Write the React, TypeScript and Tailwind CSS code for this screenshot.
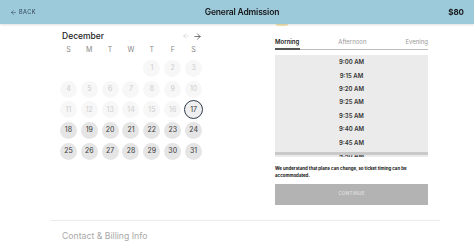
import { ArrowLeft, ArrowRight } from "lucide-react";

const dayNames = ["S", "M", "T", "W", "T", "F", "S"];
const times = ["9:00 AM", "9:15 AM", "9:20 AM", "9:25 AM", "9:35 AM", "9:40 AM", "9:45 AM", "9:50 AM"];

const DateCell = ({ day }: { day: number | null }) => {
  if (day === null) return <div />;

  const past = day < 17;
  const selected = day === 17;

  return (
    <div className="flex items-center justify-center">
      <div
        className={
          selected
            ? "flex h-[19px] w-[19px] items-center justify-center rounded-full border-[1.5px] border-[#2e3b4c] bg-[#efefef] text-[7px] text-[#333]"
            : past
              ? "flex h-[17px] w-[17px] items-center justify-center rounded-full bg-[#f7f7f7] text-[7px] text-[#cdcdcd]"
              : "flex h-[17px] w-[17px] items-center justify-center rounded-full bg-[#e5e5e5] text-[7px] text-[#3a3a3a]"
        }
      >
        {day}
      </div>
    </div>
  );
};

export default function App() {
  const cells: (number | null)[] = [null, null, null, null];
  for (let d = 1; d <= 31; d++) cells.push(d);

  return (
    <div className="min-h-screen bg-white font-['Inter',sans-serif] text-[#222]">
      <header className="fixed inset-x-0 top-0 z-10 grid h-[24px] grid-cols-[1fr_auto_1fr] items-center bg-[#9ccadb] px-[10px] shadow-[0_1px_2px_rgba(0,0,0,0.12)]">
        <div className="flex items-center gap-[2px] text-[5.5px] font-medium tracking-[0.08em] text-[#3c5563]">
          <ArrowLeft size={7} strokeWidth={2} />
          BACK
        </div>
        <h1 className="pl-[10px] text-[8.5px] font-semibold tracking-[-0.02em] text-[#161616]">General Admission</h1>
        <div className="text-right text-[8px] font-bold text-[#161616]">$80</div>
      </header>

      <main className="w-[440px] pl-[50px] pt-[14px]">
        <div className="flex">
          <div className="w-[160px] pl-[8px] pt-[16px]">
            <div className="flex h-[12px] w-[146px] items-center justify-between pl-[4px] pr-[2px]">
              <span className="text-[8.5px] font-medium text-[#1d1d1d]">December</span>
              <span className="flex items-center gap-[3px]">
                <ArrowLeft size={8} strokeWidth={1.5} className="text-[#c4c4c4]" />
                <ArrowRight size={9} strokeWidth={1.75} className="text-[#333]" />
              </span>
            </div>
            <div className="grid w-[146px] grid-cols-7">
              {dayNames.map((d, i) => (
                <div key={i} className="flex h-[16px] items-center justify-center text-[7px] text-[#888]">
                  {d}
                </div>
              ))}
            </div>
            <div className="grid w-[146px] grid-cols-7 auto-rows-[20.75px]">
              {cells.map((d, i) => (
                <DateCell key={i} day={d} />
              ))}
            </div>
          </div>

          <div className="ml-[65px] w-[153px]">
            <div className="flex h-[12px] items-center gap-[8px] pt-[4px]">
              <span className="h-[8px] w-[14px] rounded-sm bg-[#f3e4b0]" />
              <span className="text-[5px] text-[#999]">Things to know before your visit</span>
            </div>

            <div className="mt-[11px] flex h-[8px] items-center justify-between text-[6px]">
              <span className="font-semibold text-[#222]">Morning</span>
              <span className="text-[#999]">Afternoon</span>
              <span className="text-[#999]">Evening</span>
            </div>
            <div className="relative mt-[3px] h-[2px]">
              <div className="absolute inset-x-0 top-[1px] h-px bg-[#bdbdbd]" />
              <div className="absolute left-0 top-0 h-[2px] w-[25px] bg-[#555]" />
            </div>

            <div className="relative mt-[5px] h-[102px] overflow-hidden bg-[#ebebeb]">
              {times.map((t) => (
                <div key={t} className="flex h-[13.4px] items-center justify-center text-[6px] font-semibold text-[#333]">
                  {t}
                </div>
              ))}
              <div className="absolute inset-x-0 bottom-[2px] h-[3px] bg-[#c9c9c9]" />
            </div>

            <p className="mt-[8px] whitespace-nowrap text-[4.4px] font-bold leading-[7px] text-[#111]">
              We understand that plans can change, so ticket timing can be
              <br />
              accommodated.
            </p>

            <button className="mt-[4.5px] flex h-[21px] w-full items-center justify-center bg-[#b3b3b3] text-[4.6px] font-semibold tracking-[0.06em] text-[#dedede]">
              CONTINUE
            </button>
          </div>
        </div>

        <div className="mt-[15px] h-px bg-[#ececec]" />
        <div className="mt-[10px] flex h-[12px] items-center pl-[12px] text-[8.7px] text-[#a8a8a8]">
          Contact &amp; Billing Info
        </div>
      </main>
    </div>
  );
}
